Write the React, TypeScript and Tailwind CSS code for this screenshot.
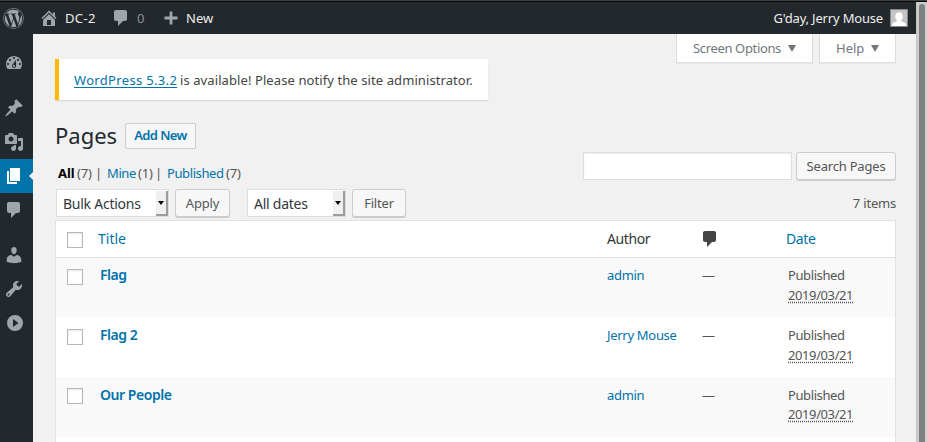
import React from "react";
import { FaWordpress } from "react-icons/fa";

const paths = {
  home: "M16 8.5l1.53 1.53-1.06 1.06L10 4.6l-6.47 6.49-1.06-1.06L10 2.5l4 4v-2h2v4zm-6-2.46l6 5.99V18H4v-5.97zM12 17v-5H8v5h4z",
  comment: "M5 2h9c1.1 0 2 .9 2 2v7c0 1.1-.9 2-2 2h-2l-5 5v-5H5c-1.1 0-2-.9-2-2V4c0-1.1.9-2 2-2z",
  plus: "M16.5 8.600v2.800h-5.100v5.100H8.600v-5.100H3.500V8.600h5.100V3.500h2.800v5.100z",
  dashboard: "M3.76 16h12.48c1.1-1.37 1.76-3.11 1.76-5 0-4.42-3.58-8-8-8s-8 3.58-8 8c0 1.89.66 3.63 1.76 5zM10 4c.55 0 1 .45 1 1s-.45 1-1 1-1-.45-1-1 .45-1 1-1zM6 6c.55 0 1 .45 1 1s-.45 1-1 1-1-.45-1-1 .45-1 1-1zm8 0c.55 0 1 .45 1 1s-.45 1-1 1-1-.45-1-1 .45-1 1-1zm-5.370 5.550L12 7v6c0 1.100-.9 2-2 2s-2-.9-2-2c0-.57.24-1.080.63-1.450zM4 10c.55 0 1 .45 1 1s-.45 1-1 1-1-.45-1-1 .45-1 1-1zm12 0c.55 0 1 .45 1 1s-.45 1-1 1-1-.45-1-1 .45-1 1-1zm-5 3c0-.55-.45-1-1-1s-1 .45-1 1 .45 1 1 1 1-.45 1-1z",
  pin: "M10.440 3.020l1.820-1.820 6.360 6.350-1.830 1.820c-1.050-.68-2.480-.57-3.410.36l-.75.75c-.92.93-1.040 2.350-.35 3.410l-1.830 1.820-2.410-2.410-2.800 2.790c-.42.42-3.380 2.710-3.800 2.290s1.860-3.390 2.280-3.810l2.790-2.790L4.100 9.360l1.830-1.820c1.050.69 2.480.57 3.400-.36l.75-.75c.93-.92 1.050-2.350.36-3.410z",
  media: "M13 11V4c0-.55-.45-1-1-1h-1.670L9 1H5L3.670 3H2c-.55 0-1 .45-1 1v7c0 .55.45 1 1 1h10c.55 0 1-.45 1-1zM7 4.500c1.380 0 2.500 1.120 2.500 2.500S8.380 9.500 7 9.500 4.500 8.380 4.500 7 5.620 4.500 7 4.500zM14 6h5v10.500c0 1.380-1.120 2.500-2.500 2.500S14 17.880 14 16.500s1.120-2.500 2.500-2.500c.17 0 .34.02.5.05V9h-3V6zm-4 8.050V13h2v3.500c0 1.380-1.120 2.500-2.500 2.500S7 17.880 7 16.500 8.120 14 9.500 14c.17 0 .34.02.5.05z",
  page: "M6 15V2h10v13H6zm-1 1h8v2H3V5h2v11z",
  user: "M10 9.250c-2.270 0-2.730-3.440-2.730-3.440C7 4.020 7.820 2 9.970 2c2.160 0 2.980 2.020 2.710 3.810 0 0-.41 3.440-2.680 3.440zm0 2.570L12.720 10c2.390 0 4.520 2.330 4.520 4.530v2.490s-3.650 1.130-7.240 1.130c-3.650 0-7.240-1.130-7.240-1.130v-2.490c0-2.250 1.940-4.480 4.470-4.480z",
  wrench: "M16.680 9.770c-1.340 1.340-3.300 1.670-4.950.99l-5.410 6.520c-.99.99-2.590.99-3.580 0s-.99-2.590 0-3.570l6.520-5.420c-.68-1.650-.35-3.610.99-4.950 1.280-1.280 3.120-1.620 4.720-1.060l-2.890 2.890 2.820 2.820 2.860-2.870c.53 1.580.18 3.390-1.080 4.650zM3.810 16.210c.4.39 1.040.39 1.430 0 .4-.4.4-1.040 0-1.430-.39-.4-1.030-.4-1.430 0-.39.39-.39 1.030 0 1.430z",
  collapse: "M11 2a8 8 0 1 0 0 16 8 8 0 0 0 0-16zM9 6l5.500 4L9 14z",
};

function Icon({ name, className = "" }: { name: keyof typeof paths; className?: string }) {
  return (
    <svg viewBox="0 0 20 20" className={`size-5 shrink-0 ${className}`} fill="currentColor" fillRule="evenodd">
      <path d={paths[name]} />
    </svg>
  );
}

function Side({ name, gap = "" }: { name: keyof typeof paths; gap?: string }) {
  const active = name === "page";
  return (
    <a className={`relative flex h-[34px] w-full shrink-0 items-center pl-1 ${gap} ${active ? "bg-[#0073aa] text-white" : "text-[#a0a5aa]"}`}>
      <Icon name={name} />
      {active && <span className="absolute right-0 top-[13px] border-y-4 border-r-4 border-y-transparent border-r-[#f1f1f1]" />}
    </a>
  );
}

function Check() {
  return <span className="block size-4 border border-[#b4b9be] bg-white shadow-[inset_0_1px_2px_rgba(0,0,0,0.1)]" />;
}

function Button({ children, className }: { children: React.ReactNode; className: string }) {
  return (
    <button className={`flex h-7 items-center justify-center whitespace-nowrap rounded-[3px] border border-[#ccc] bg-[#f7f7f7] pt-[2px] tracking-[-0.2px] text-[#555] shadow-[0_1px_0_#ccc] ${className}`}>
      {children}
    </button>
  );
}

function Select({ children, className }: { children: React.ReactNode; className: string }) {
  return (
    <div className={`flex h-7 items-stretch justify-between whitespace-nowrap border border-[#ddd] bg-white text-[14px] tracking-[-0.25px] text-[#32373c] ${className}`}>
      <span className="self-center pl-[6px]">{children}</span>
      <span className="mt-px flex w-3 items-center justify-center border-b-2 border-r-2 border-[#9c9c9c] bg-[#f0f0f0]">
        <span className="border-x-[3px] border-t-4 border-x-transparent border-t-black" />
      </span>
    </div>
  );
}

function Filter({ label, count, labelClass, countClass }: { label: string; count: number; labelClass: string; countClass: string }) {
  return (
    <>
      <span className={labelClass}>{label}</span>
      <span className={`tracking-[-0.2px] ${countClass}`}>({count})</span>
    </>
  );
}

const rows = [
  { title: "Flag", author: "admin", row: "h-[59px] bg-[#f9f9f9] pt-[7px]", check: "pt-1", date: "" },
  { title: "Flag 2", author: "Jerry Mouse", row: "h-[60px] bg-white pt-2", check: "pt-1", date: "" },
  { title: "Our People", author: "admin", row: "h-[60px] bg-[#f9f9f9] pt-2", check: "pt-[3px]", date: "-mt-px" },
];

export default function App() {
  return (
    <div className="flex h-[442px] w-[927px] flex-col overflow-hidden bg-[#f1f1f1] font-['Noto_Sans','Open_Sans',sans-serif] text-[13px] text-[#555]">
      <div className="h-[2px] shrink-0 border-b border-[#080a0b] bg-[#3c4145]" />
      <div className="flex min-h-0 flex-1">
        <div className="flex min-w-0 flex-1 flex-col">
          <header className="flex h-8 shrink-0 items-center bg-[#23282d] text-[#eee]">
            <FaWordpress className="ml-[3px] size-[21px] text-[#a0a5aa]" />
            <Icon name="home" className="ml-[15px] text-[#a0a5aa]" />
            <span className="ml-[6px] w-[31px] whitespace-nowrap pt-[2px] tracking-[0.35px]">DC-2</span>
            <Icon name="comment" className="ml-[15px] text-[#a0a5aa]" />
            <span className="ml-[6px] w-[9px] pt-[2px] text-[#8b8f94]">0</span>
            <Icon name="plus" className="ml-[15px] text-[#a0a5aa]" />
            <span className="ml-[5px] pt-[2px]">New</span>
            <span className="ml-auto whitespace-nowrap pt-[2px] tracking-[-0.18px]">G'day, Jerry Mouse</span>
            <span className="ml-[7px] mr-2 flex size-[18px] border border-[#82878c] bg-[#c4c4c4]">
              <svg viewBox="0 0 16 16" className="size-4" fill="#fff">
                <ellipse cx="8" cy="6.500" rx="3.700" ry="4.300" />
                <path d="M6 9h4v2l4 2q1 .6 1 3H1q0-2.400 1-3l4-2z" />
              </svg>
            </span>
          </header>
          <div className="flex min-h-0 flex-1">
            <aside className="flex w-[33px] shrink-0 flex-col bg-[#23282d]">
              <Side name="dashboard" gap="mt-[12px]" />
              <Side name="pin" gap="mt-[11px]" />
              <Side name="media" />
              <Side name="page" />
              <Side name="comment" />
              <Side name="user" gap="mt-[11px]" />
              <Side name="wrench" />
              <Side name="collapse" />
            </aside>
            <main className="flex min-w-0 flex-1 flex-col pl-[22px]">
              <div className="flex h-[68px] shrink-0 items-start">
                <div className="mt-[25px] flex h-[41px] w-[433px] shrink-0 items-center whitespace-nowrap border-l-4 border-[#ffb900] bg-white pl-[15px] pt-[2px] text-[#444] shadow-[0_1px_1px_rgba(0,0,0,0.1)]">
                  <span className="w-[103px] tracking-[0.33px] text-[#0073aa] underline underline-offset-2">WordPress 5.3.2</span>
                  <span className="pl-[3px] tracking-[0.09px]">is available! Please notify the site administrator.</span>
                </div>
                <div className="ml-auto mr-[20px] flex gap-[6px]">
                  {[
                    { t: "Screen Options", w: "w-[137px]", s: "tracking-[-0.35px] w-[88px]" },
                    { t: "Help", w: "w-[77px]", s: "w-[28px]" },
                  ].map(({ t, w, s }) => (
                    <div key={t} className={`flex h-[29px] items-center gap-[7px] whitespace-nowrap border border-t-0 border-[#ddd] bg-white pl-4 text-[#72777c] shadow-[0_1px_1px_rgba(0,0,0,0.04)] ${w}`}>
                      <span className={`pt-px ${s}`}>{t}</span>
                      <span className="border-x-4 border-t-[7px] border-x-transparent border-t-[#72777c]" />
                    </div>
                  ))}
                </div>
              </div>
              <div className="mt-[19px] flex h-[28px] shrink-0 items-center">
                <h1 className="w-[70px] whitespace-nowrap text-[22px] text-[#23282d]">Pages</h1>
                <a className="mt-px flex h-[26px] w-[71px] items-center justify-center whitespace-nowrap rounded-[2px] border border-[#ccc] bg-[#f7f7f7] font-semibold tracking-[-0.6px] text-[#0073aa]">Add New</a>
              </div>
              <div className="flex h-[39px] shrink-0 items-start pr-[20px]">
                <div className="mt-[15px] flex whitespace-nowrap pl-[3px]">
                  <Filter label="All" count={7} labelClass="w-[19px] font-bold text-black" countClass="w-[18px]" />
                  <span className="w-[12px]">|</span>
                  <Filter label="Mine" count={1} labelClass="w-[31px] tracking-[-0.4px] text-[#0073aa]" countClass="w-[17px]" />
                  <span className="w-[12px]">|</span>
                  <Filter label="Published" count={7} labelClass="w-[59px] tracking-[-0.4px] text-[#0073aa]" countClass="" />
                </div>
                <div className="ml-auto mt-[3px] h-7 w-[209px] border border-[#ddd] bg-white shadow-[inset_0_1px_2px_rgba(0,0,0,0.07)]" />
                <Button className="ml-1 mt-[3px] w-[100px]">Search Pages</Button>
              </div>
              <div className="mt-px flex h-[31px] shrink-0 items-start pr-[20px]">
                <Select className="ml-px w-[113px]">Bulk Actions</Select>
                <Button className="ml-[6px] w-[55px]">Apply</Button>
                <Select className="ml-[17px] w-[99px]">All dates</Select>
                <Button className="ml-[6px] w-[54px]">Filter</Button>
                <span className="ml-auto mt-[5px] tracking-[-0.2px]">7 items</span>
              </div>
              <div className="mr-[20px] flex-1 overflow-hidden border border-b-0 border-[#e1e1e1] bg-white">
                <div className="flex h-[37px] items-center border-b border-[#e1e1e1] text-[14px] text-[#32373c]">
                  <div className="w-[42px] pl-[11px] pt-px"><Check /></div>
                  <div className="w-[509px] pb-px text-[#0073aa]">Title</div>
                  <div className="w-[93px] pb-px tracking-[-0.4px]">Author</div>
                  <div className="w-[86px]"><Icon name="comment" className="text-[#444]" /></div>
                  <div className="pb-px tracking-[-0.4px] text-[#0073aa]">Date</div>
                </div>
                {rows.map((r) => (
                  <div key={r.title} className={`flex items-start whitespace-nowrap leading-5 ${r.row}`}>
                    <div className={`w-[44px] pl-[11px] ${r.check}`}><Check /></div>
                    <div className="w-[507px] text-[14px] font-semibold tracking-[-0.45px] text-[#0073aa]">{r.title}</div>
                    <div className="w-[95px] tracking-[-0.3px] text-[#0073aa]">{r.author}</div>
                    <div className="w-[86px]">—</div>
                    <div className="tracking-[-0.4px]">
                      <div>Published</div>
                      <div className={`underline decoration-dotted underline-offset-2 ${r.date}`}>2019/03/21</div>
                    </div>
                  </div>
                ))}
              </div>
            </main>
          </div>
        </div>
        <div className="flex w-[11px] shrink-0 justify-end border-l border-[#c5c5c0] bg-[#cdcdc9] pr-[2px] pt-[2px]">
          <div className="w-[6px] rounded-t-full bg-[#7d8181]" />
        </div>
      </div>
    </div>
  );
}
